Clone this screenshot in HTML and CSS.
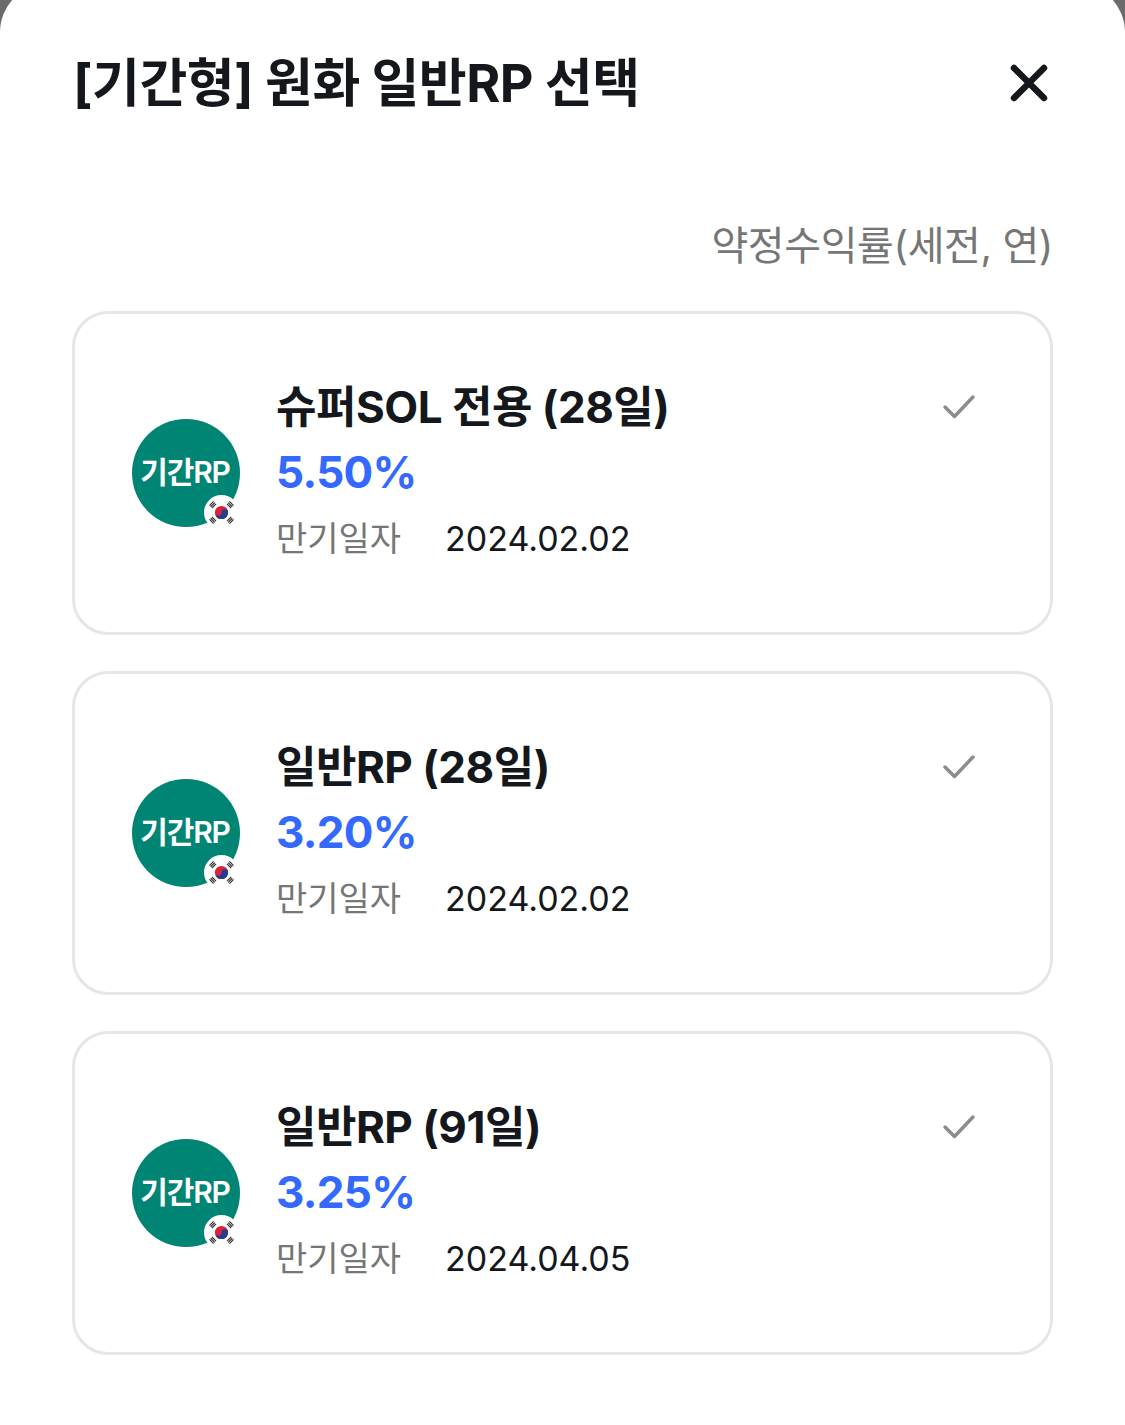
FILE: index.html
```html
<!DOCTYPE html>
<html lang="ko">

<head>
    <meta charset="utf-8">
    <title>원화 일반RP 선택</title>
    <link rel="stylesheet" href="styles.css">
</head>

<body>
    <svg class="defs" width="0" height="0">
        <symbol id="flag" viewBox="0 0 36 36">
            <circle cx="18" cy="18" r="18" fill="#fff"/>
            <g stroke="#333" stroke-width="1.200" fill="none">
                <path transform="translate(9 10) rotate(-45)" d="M-3-1.800h6M-3 0h6M-3 1.800h6"/>
                <path transform="translate(27 10) rotate(45)" d="M-3-1.800h6M-3 0h6M-3 1.800h6"/>
                <path transform="translate(9 26) rotate(45)" d="M-3-1.800h6M-3 0h6M-3 1.800h6"/>
                <path transform="translate(27 26) rotate(-45)" d="M-3-1.800h6M-3 0h6M-3 1.800h6"/>
            </g>
            <circle cx="18" cy="18" r="6.800" fill="#e0203a"/>
            <path d="M11.200 18a6.800 6.800 0 0 0 13.600 0a3.400 3.400 0 0 0-6.800 0a3.400 3.400 0 0 1-6.800 0z" fill="#1f3f94"/>
        </symbol>
        <symbol id="check" viewBox="0 0 36 36">
            <path d="M4 18l9.500 9.500L32 8" fill="none" stroke="#8c8c8c" stroke-width="3.500" stroke-linecap="round" stroke-linejoin="round"/>
        </symbol>
    </svg>

    <div class="sheet">
        <header class="sheet-head">
            <h1>[기간형] 원화 일반RP 선택</h1>
            <button class="close" type="button" aria-label="닫기">
                <svg width="48" height="48" viewBox="0 0 48 48">
                    <path d="M9 9l30 30M39 9L9 39" fill="none" stroke="#14181c" stroke-width="6.500" stroke-linecap="round"/>
                </svg>
            </button>
        </header>

        <p class="rate-label">약정수익률(세전, 연)</p>

        <ul class="list">
            <li class="card">
                <div class="badge">
                    <span>기간RP</span>
                    <svg class="flag"><use href="#flag"/></svg>
                </div>
                <div class="info">
                    <h2>슈퍼SOL 전용 (28일)</h2>
                    <p class="rate">5.50%</p>
                    <p class="due"><span class="due-label">만기일자</span><span>2024.02.02</span></p>
                </div>
                <svg class="check"><use href="#check"/></svg>
            </li>
            <li class="card">
                <div class="badge">
                    <span>기간RP</span>
                    <svg class="flag"><use href="#flag"/></svg>
                </div>
                <div class="info">
                    <h2>일반RP (28일)</h2>
                    <p class="rate">3.20%</p>
                    <p class="due"><span class="due-label">만기일자</span><span>2024.02.02</span></p>
                </div>
                <svg class="check"><use href="#check"/></svg>
            </li>
            <li class="card">
                <div class="badge">
                    <span>기간RP</span>
                    <svg class="flag"><use href="#flag"/></svg>
                </div>
                <div class="info">
                    <h2>일반RP (91일)</h2>
                    <p class="rate">3.25%</p>
                    <p class="due"><span class="due-label">만기일자</span><span>2024.04.05</span></p>
                </div>
                <svg class="check"><use href="#check"/></svg>
            </li>
        </ul>
    </div>
</body>

</html>
```

FILE: styles.css
```css
* {
    box-sizing: border-box;
}

html, body {
    height: 100%;
}

body {
    margin: 0;
    background-color: #6b6b6b;
    font-family: "Inter", "Noto Sans CJK KR", sans-serif;
    color: #14181c;
}

.defs {
    display: block;
    height: 0;
}

/* 바텀시트 - 위쪽 모서리가 화면 밖으로 살짝 잘림 */
.sheet {
    min-height: calc(100% + 16px);
    margin-top: -16px;
    padding: 61px 72px 0;
    background-color: #fff;
    border-radius: 48px 48px 0 0;
}

.sheet-head {
    display: flex;
    justify-content: space-between;
    align-items: center;
    height: 68px;
}

h1 {
    margin: 0 0 0 1px;
    font-size: 52px;
    font-weight: 700;
    letter-spacing: -0.5px;
}

.close {
    display: block;
    width: 48px;
    height: 48px;
    margin-top: 8px;
    padding: 0;
    border: 0;
    background: none;
}

.rate-label {
    margin: 103px 0 0;
    font-size: 40px;
    line-height: 60px;
    letter-spacing: -0.4px;
    text-align: right;
    color: #767676;
}

.list {
    margin: 35px 0 0;
    padding: 0;
    list-style: none;
    display: flex;
    flex-direction: column;
    gap: 36px;
}

/* 상품 카드 */
.card {
    display: flex;
    align-items: center;
    width: 981px;
    height: 324px;
    padding: 0 57px;
    border: 3px solid #e6e6e6;
    border-radius: 36px;
}

.badge {
    position: relative;
    flex: none;
    display: flex;
    justify-content: center;
    align-items: center;
    width: 108px;
    height: 108px;
    padding: 0 2px 7px 0;
    border-radius: 50%;
    background-color: #008574;
    color: #fff;
    font-size: 30px;
    font-weight: 600;
    letter-spacing: -1.2px;
}

.flag {
    position: absolute;
    right: 1px;
    bottom: -3px;
    width: 35px;
    height: 35px;
}

.info {
    flex: 1;
    margin-left: 36px;
}

h2 {
    margin: 0;
    font-size: 44px;
    line-height: 66px;
    font-weight: 700;
    letter-spacing: -0.5px;
}

.rate {
    margin: -1px 0 1px;
    font-size: 44px;
    line-height: 66px;
    font-weight: 700;
    letter-spacing: -0.7px;
    color: #3369ff;
}

.due {
    display: flex;
    margin: 0;
    font-size: 34px;
    line-height: 66px;
}

.due-label {
    width: 169px;
    color: #767676;
}

.check {
    flex: none;
    align-self: flex-start;
    width: 36px;
    height: 36px;
    margin-top: 75px;
    margin-right: 16px;
}
```
